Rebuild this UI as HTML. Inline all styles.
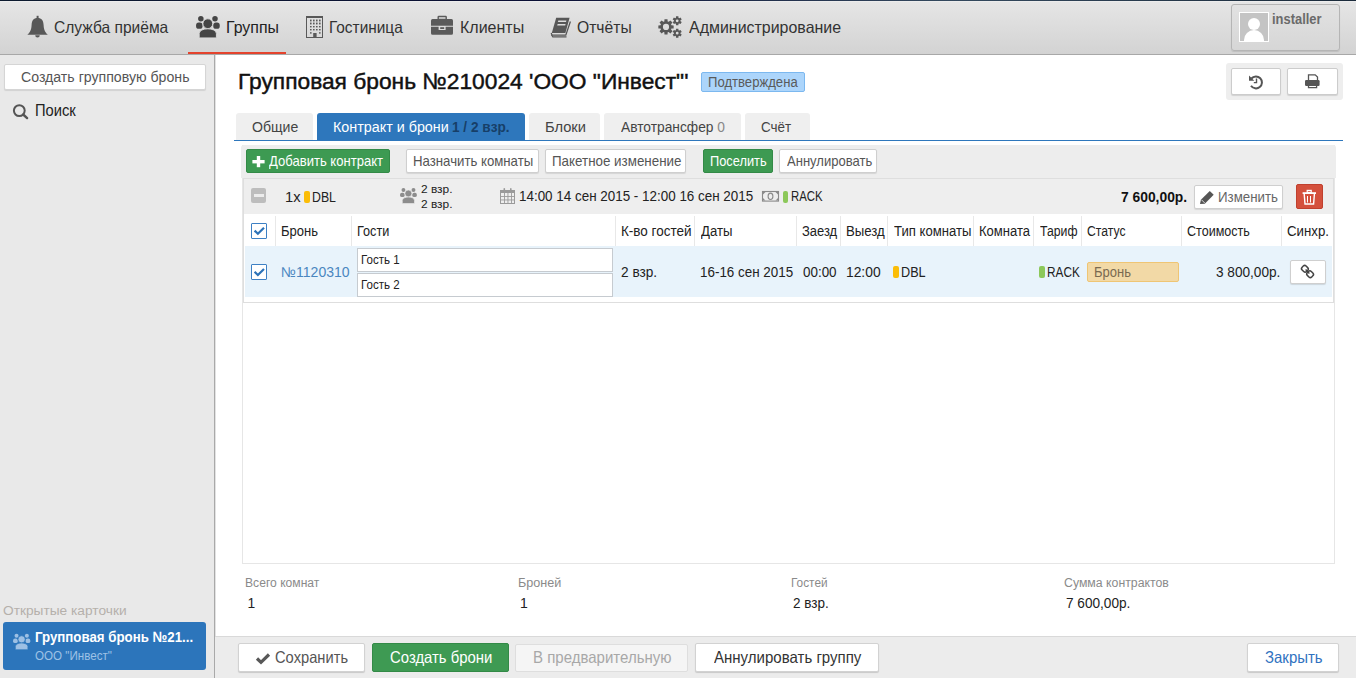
<!DOCTYPE html>
<html><head><meta charset="utf-8">
<style>
*{box-sizing:border-box;margin:0;padding:0}
html,body{width:1356px;height:678px;overflow:hidden;background:#fff;font-family:"Liberation Sans",sans-serif;color:#222}
.t{position:absolute;white-space:nowrap;line-height:30px;transform-origin:0 0}
#h1{-webkit-text-stroke:0.45px currentColor}
.b{position:absolute}
svg{position:absolute;overflow:visible}
</style></head><body>
<!-- top nav -->
<div class="b" style="left:0;top:0;width:1356px;height:55px;background:linear-gradient(#e6e6e6,#d3d3d3);border-bottom:1px solid #a8a8a8"></div>
<div class="b" style="left:0;top:0;width:1356px;height:1px;background:linear-gradient(90deg,#0c1a2e,#0a0f35 40%,#34495e 70%,#1a2a3a)"></div><div class="b" style="left:0;top:1px;width:1356px;height:1px;background:#ececec"></div>
<div class="b" style="left:188px;top:52px;width:98px;height:2px;background:#e4432d"></div>
<!-- user box -->
<div class="b" style="left:1231px;top:4px;width:109px;height:47px;background:linear-gradient(#e2e2e2,#d6d6d6);border:1px solid #b5b5b5;border-radius:3px;box-shadow:0 1px 1px rgba(0,0,0,.1)"></div>
<div class="b" style="left:1239px;top:12px;width:30px;height:30px;background:#c4c4c4;border:1px solid #fff;overflow:hidden">
  <div class="b" style="left:7.8px;top:5px;width:12.4px;height:12.4px;border-radius:50%;background:#fff"></div>
  <div class="b" style="left:3.7px;top:16.7px;width:20.7px;height:14px;border-radius:10.3px 10.3px 0 0;background:#fff"></div>
</div>
<!-- sidebar -->
<div class="b" style="left:0;top:55px;width:215px;height:623px;background:#e9e9e9;border-right:1px solid #a9a9a9"></div><div class="b" style="left:215px;top:55px;width:1px;height:623px;background:#e2e2e2"></div>
<div class="b" style="left:4px;top:64px;width:202px;height:26px;background:#fff;border:1px solid #d5d5d5;border-radius:2px;box-shadow:0 1px 1px rgba(0,0,0,.1)"></div>
<div class="b" style="left:3px;top:622px;width:203px;height:48px;background:#2c75bb;border-radius:3px"></div>
<!-- history/print -->
<div class="b" style="left:1226px;top:63px;width:117px;height:37px;background:#eeeeee;border-radius:3px"></div>
<div class="b" style="left:1231px;top:68px;width:50px;height:27px;background:#fff;border:1px solid #ccc;border-radius:2px;box-shadow:0 1px 1px rgba(0,0,0,.12)"></div>
<div class="b" style="left:1287px;top:68px;width:51px;height:27px;background:#fff;border:1px solid #ccc;border-radius:2px;box-shadow:0 1px 1px rgba(0,0,0,.12)"></div>
<!-- badge -->
<div class="b" style="left:701px;top:72px;width:104px;height:20px;background:#acd5fb;border:1px solid #7cb8ef;border-radius:2px"></div>
<!-- tabs -->
<div class="b" style="left:236px;top:113px;width:77px;height:27px;background:#efefef;border-radius:3px 3px 0 0"></div>
<div class="b" style="left:317px;top:113px;width:208px;height:28px;background:#2e77bc;border-radius:3px 3px 0 0"></div>
<div class="b" style="left:529px;top:113px;width:71px;height:27px;background:#efefef;border-radius:3px 3px 0 0"></div>
<div class="b" style="left:604px;top:113px;width:137px;height:27px;background:#efefef;border-radius:3px 3px 0 0"></div>
<div class="b" style="left:745px;top:113px;width:65px;height:27px;background:#efefef;border-radius:3px 3px 0 0"></div>
<div class="b" style="left:234px;top:140px;width:1109px;height:1px;background:#2e77bc"></div>
<!-- outer container -->
<div class="b" style="left:242px;top:145px;width:1093px;height:419px;border:1px solid #e6e6e6"></div>
<!-- toolbar -->
<div class="b" style="left:241px;top:145px;width:1095px;height:33px;background:#ededed;border-radius:3px 3px 0 0"></div>
<div class="b" style="left:246px;top:149px;width:144px;height:24px;background:#3d9a52;border:1px solid #338a47;border-radius:2px"></div>
<div class="b" style="left:406px;top:149px;width:133px;height:24px;background:#fff;border:1px solid #cfcfcf;border-radius:2px;box-shadow:0 1px 1px rgba(0,0,0,.1)"></div>
<div class="b" style="left:545px;top:149px;width:141px;height:24px;background:#fff;border:1px solid #cfcfcf;border-radius:2px;box-shadow:0 1px 1px rgba(0,0,0,.1)"></div>
<div class="b" style="left:703px;top:149px;width:70px;height:24px;background:#3d9a52;border:1px solid #338a47;border-radius:2px"></div>
<div class="b" style="left:779px;top:149px;width:98px;height:24px;background:#fff;border:1px solid #cfcfcf;border-radius:2px;box-shadow:0 1px 1px rgba(0,0,0,.1)"></div>
<!-- contract block -->
<div class="b" style="left:243px;top:178px;width:1091px;height:125px;border:1px solid #dedede;background:#fff"></div>
<div class="b" style="left:244px;top:179px;width:1089px;height:35px;background:#eeeeee"></div>
<div class="b" style="left:251px;top:188px;width:15px;height:15px;background:#bdbdbd;border-radius:2px"><div class="b" style="left:2.5px;top:6px;width:10px;height:3px;background:#ececec"></div></div>
<div class="b" style="left:304px;top:191px;width:6px;height:12px;background:#fbbd08;border-radius:2px"></div>
<div class="b" style="left:783px;top:191px;width:5px;height:12px;background:#8cc85a;border-radius:2px"></div>
<div class="b" style="left:1194px;top:185px;width:89px;height:24px;background:#fff;border:1px solid #cfcfcf;border-radius:2px;box-shadow:0 1px 1px rgba(0,0,0,.1)"></div>
<div class="b" style="left:1296px;top:184px;width:27px;height:25px;background:#d4503c;border:1px solid #c0402e;border-radius:2px"></div>
<!-- header separators -->
<div class="b" style="left:275px;top:216px;width:1px;height:30px;background:#e8e8e8"></div>
<div class="b" style="left:351px;top:216px;width:1px;height:30px;background:#e8e8e8"></div>
<div class="b" style="left:615px;top:216px;width:1px;height:30px;background:#e8e8e8"></div>
<div class="b" style="left:694px;top:216px;width:1px;height:30px;background:#e8e8e8"></div>
<div class="b" style="left:796px;top:216px;width:1px;height:30px;background:#e8e8e8"></div>
<div class="b" style="left:840px;top:216px;width:1px;height:30px;background:#e8e8e8"></div>
<div class="b" style="left:887px;top:216px;width:1px;height:30px;background:#e8e8e8"></div>
<div class="b" style="left:973px;top:216px;width:1px;height:30px;background:#e8e8e8"></div>
<div class="b" style="left:1033px;top:216px;width:1px;height:30px;background:#e8e8e8"></div>
<div class="b" style="left:1081px;top:216px;width:1px;height:30px;background:#e8e8e8"></div>
<div class="b" style="left:1181px;top:216px;width:1px;height:30px;background:#e8e8e8"></div>
<div class="b" style="left:1281px;top:216px;width:1px;height:30px;background:#e8e8e8"></div>
<!-- row -->
<div class="b" style="left:245px;top:246px;width:1087px;height:51px;background:#e8f3fb"></div>
<div class="b" style="left:357px;top:248px;width:256px;height:24px;background:#fff;border:1px solid #c6cbd0"></div>
<div class="b" style="left:357px;top:273px;width:256px;height:24px;background:#fff;border:1px solid #c6cbd0"></div>
<div class="b" style="left:893px;top:266px;width:6px;height:12px;background:#fbbd08;border-radius:2px"></div>
<div class="b" style="left:1039px;top:266px;width:6px;height:12px;background:#8cc85a;border-radius:2px"></div>
<div class="b" style="left:1087px;top:262px;width:92px;height:20px;background:#f2d9a6;border:1px solid #efc574;border-radius:2px"></div>
<div class="b" style="left:1290px;top:260px;width:36px;height:24px;background:#fff;border:1px solid #cfcfcf;border-radius:2px;box-shadow:0 1px 1px rgba(0,0,0,.12)"></div>
<!-- checkboxes -->
<div class="b" style="left:251px;top:223px;width:16px;height:16px;background:#fff;border:1px solid #3d80c4;border-radius:1px"></div>
<div class="b" style="left:251px;top:264px;width:16px;height:16px;background:#fff;border:1px solid #3d80c4;border-radius:1px"></div>
<!-- footer -->
<div class="b" style="left:215px;top:636px;width:1141px;height:42px;background:#ececec;border-top:1px solid #d9d9d9"></div>
<div class="b" style="left:238px;top:643px;width:127px;height:29px;background:#fff;border:1px solid #d2d2d2;border-radius:2px;box-shadow:0 1px 1px rgba(0,0,0,.15)"></div>
<div class="b" style="left:372px;top:643px;width:137px;height:29px;background:#3e9a53;border:1px solid #338a47;border-radius:2px"></div>
<div class="b" style="left:515px;top:644px;width:173px;height:28px;background:#f5f5f5;border:1px solid #dedede;border-radius:2px"></div>
<div class="b" style="left:695px;top:643px;width:184px;height:29px;background:#fff;border:1px solid #d2d2d2;border-radius:2px;box-shadow:0 1px 1px rgba(0,0,0,.15)"></div>
<div class="b" style="left:1247px;top:643px;width:92px;height:29px;background:#fff;border:1px solid #d2d2d2;border-radius:2px;box-shadow:0 1px 1px rgba(0,0,0,.15)"></div>

<svg width="1356" height="678" style="left:0;top:0" viewBox="0 0 1356 678"><rect x="36.6" y="15.8" width="2" height="3" fill="#585858"/><path d="M37.6,18 C33.6,18 31.8,20.5 31.6,25 C31.3,30.5 30,32.3 27.3,34.8 L47.9,34.8 C45.2,32.3 43.9,30.5 43.6,25 C43.4,20.5 41.6,18 37.6,18 Z" fill="#585858"/><path d="M35.2,35.2 h4.6 a2.3,2.3 0 0 1 -4.6,0 Z" fill="#585858"/><circle cx="200.85" cy="18.85" r="2.75" fill="#454545"/><circle cx="215.00" cy="18.85" r="2.75" fill="#454545"/><rect x="196.10" y="22.60" width="6.40" height="6.20" rx="2.60" fill="#454545"/><rect x="213.30" y="22.60" width="6.40" height="6.20" rx="2.60" fill="#454545"/><circle cx="207.80" cy="23.70" r="4.90" fill="#454545" stroke="#dbdbdb" stroke-width="0.90"/><path d="M199.20,37.90 L199.20,33.60 C199.20,27.20 216.40,27.20 216.40,33.60 L216.40,37.90 Z" fill="#454545" stroke="#dbdbdb" stroke-width="0.90"/><rect x="306" y="16" width="17" height="2" fill="#595959"/><rect x="306.5" y="17" width="16" height="20.5" fill="none" stroke="#595959" stroke-width="1"/><rect x="310" y="19.6" width="1.6" height="1.8" fill="#595959"/><rect x="310" y="22.6" width="1.6" height="1.8" fill="#595959"/><rect x="310" y="26" width="1.6" height="1.4" fill="#595959"/><rect x="310" y="29" width="1.6" height="1.4" fill="#595959"/><rect x="313" y="19.6" width="1.6" height="1.8" fill="#595959"/><rect x="313" y="22.6" width="1.6" height="1.8" fill="#595959"/><rect x="313" y="26" width="1.6" height="1.4" fill="#595959"/><rect x="313" y="29" width="1.6" height="1.4" fill="#595959"/><rect x="316" y="19.6" width="1.6" height="1.8" fill="#595959"/><rect x="316" y="22.6" width="1.6" height="1.8" fill="#595959"/><rect x="316" y="26" width="1.6" height="1.4" fill="#595959"/><rect x="316" y="29" width="1.6" height="1.4" fill="#595959"/><rect x="319" y="19.6" width="1.6" height="1.8" fill="#595959"/><rect x="319" y="22.6" width="1.6" height="1.8" fill="#595959"/><rect x="319" y="26" width="1.6" height="1.4" fill="#595959"/><rect x="319" y="29" width="1.6" height="1.4" fill="#595959"/><rect x="310" y="32.2" width="1.6" height="1.4" fill="#595959"/><rect x="319" y="32.2" width="1.6" height="1.4" fill="#595959"/><rect x="313.2" y="33" width="3.4" height="4.8" fill="#595959"/><rect x="438.2" y="16.5" width="8" height="3" fill="none" stroke="#5a5a5a" stroke-width="1.4" rx="0.6"/><path d="M432.5,19 h19 a1.5,1.5 0 0 1 1.5,1.5 v5.3 h-22 v-5.3 a1.5,1.5 0 0 1 1.5,-1.5 Z" fill="#5a5a5a"/><path d="M431,26.8 h7.6 v3.2 h7 v-3.2 h7.4 v6.5 a1.5,1.5 0 0 1 -1.5,1.5 h-19 a1.5,1.5 0 0 1 -1.5,-1.5 Z" fill="#5a5a5a"/><rect x="440.2" y="27.2" width="4" height="1.8" fill="#5a5a5a"/><path d="M556.2,17.8 L569.6,17.8 L565.4,33 L551.8,33 Z" fill="#575757"/><path d="M558.3,20.6 L566.4,20.6 L566,22 L557.9,22 Z" fill="#dcdcdc"/><path d="M557.6,24 L565.6,24 L565.2,25.4 L557.2,25.4 Z" fill="#dcdcdc"/><path d="M551.2,33 L552,35.2 L565.8,35.2 L570.4,21.5" fill="none" stroke="#575757" stroke-width="1.3"/><path d="M551.6,35 L552.8,36.9 L566.5,36.9" fill="none" stroke="#575757" stroke-width="1.2"/><path d="M673.65,25.38 L673.65,28.42 L671.45,28.55 L671.03,29.59 L672.49,31.23 L670.33,33.39 L668.69,31.93 L667.65,32.35 L667.52,34.55 L664.48,34.55 L664.35,32.35 L663.31,31.93 L661.67,33.39 L659.51,31.23 L660.97,29.59 L660.55,28.55 L658.35,28.42 L658.35,25.38 L660.55,25.25 L660.97,24.21 L659.51,22.57 L661.67,20.41 L663.31,21.87 L664.35,21.45 L664.48,19.25 L667.52,19.25 L667.65,21.45 L668.69,21.87 L670.33,20.41 L672.49,22.57 L671.03,24.21 L671.45,25.25 Z M669.10,26.90 A3.1,3.1 0 1 0 662.90,26.90 A3.1,3.1 0 1 0 669.10,26.90 Z" fill="#575757" fill-rule="evenodd"/><path d="M681.74,22.02 L680.52,24.12 L679.21,23.42 L678.46,23.85 L678.42,25.34 L675.98,25.34 L675.94,23.85 L675.19,23.42 L673.88,24.12 L672.66,22.02 L673.93,21.23 L673.93,20.37 L672.66,19.58 L673.88,17.48 L675.19,18.18 L675.94,17.75 L675.98,16.26 L678.42,16.26 L678.46,17.75 L679.21,18.18 L680.52,17.48 L681.74,19.58 L680.47,20.37 L680.47,21.23 Z M678.60,20.80 A1.4,1.4 0 1 0 675.80,20.80 A1.4,1.4 0 1 0 678.60,20.80 Z" fill="#575757" fill-rule="evenodd"/><path d="M681.74,34.42 L680.52,36.52 L679.21,35.82 L678.46,36.25 L678.42,37.74 L675.98,37.74 L675.94,36.25 L675.19,35.82 L673.88,36.52 L672.66,34.42 L673.93,33.63 L673.93,32.77 L672.66,31.98 L673.88,29.88 L675.19,30.58 L675.94,30.15 L675.98,28.66 L678.42,28.66 L678.46,30.15 L679.21,30.58 L680.52,29.88 L681.74,31.98 L680.47,32.77 L680.47,33.63 Z M678.60,33.20 A1.4,1.4 0 1 0 675.80,33.20 A1.4,1.4 0 1 0 678.60,33.20 Z" fill="#575757" fill-rule="evenodd"/><circle cx="19.3" cy="110.6" r="5.4" fill="none" stroke="#555" stroke-width="2"/><path d="M23.2,114.5 L27.1,118.1" stroke="#555" stroke-width="2.4" stroke-linecap="round"/><path d="M1251.4,78.5 A6,6 0 1 1 1251,85.8" fill="none" stroke="#555" stroke-width="2"/><path d="M1249,75.5 L1249,80.8 L1254.3,80.8 Z" fill="#555"/><path d="M1256.5,78.5 V82.6 H1253.8" fill="none" stroke="#555" stroke-width="1.4"/><path d="M1308.5,80 V74.8 H1315.2 L1317.5,77 V80" fill="none" stroke="#555" stroke-width="1.3"/><rect x="1305" y="80" width="14.6" height="6" rx="1.2" fill="#555"/><path d="M1308.5,85 V87.6 H1316.6 V85" fill="none" stroke="#555" stroke-width="1.3"/><rect x="252.4" y="160" width="12.2" height="3.4" fill="#fff"/><rect x="256.8" y="156" width="3.4" height="11.2" fill="#fff"/><circle cx="403.44" cy="190.03" r="1.95" fill="#8c8c8c"/><circle cx="413.49" cy="190.03" r="1.95" fill="#8c8c8c"/><rect x="400.07" y="192.70" width="4.54" height="4.40" rx="1.85" fill="#8c8c8c"/><rect x="412.28" y="192.70" width="4.54" height="4.40" rx="1.85" fill="#8c8c8c"/><circle cx="408.38" cy="193.48" r="3.48" fill="#8c8c8c" stroke="#eeeeee" stroke-width="0.64"/><path d="M402.27,203.56 L402.27,200.51 C402.27,195.96 414.48,195.96 414.48,200.51 L414.48,203.56 Z" fill="#8c8c8c" stroke="#eeeeee" stroke-width="0.64"/><rect x="500.5" y="190.5" width="14" height="13" fill="none" stroke="#9a9a9a" stroke-width="1"/><rect x="500" y="190" width="15" height="3" fill="#9a9a9a"/><rect x="504" y="193" width="0.9" height="10.5" fill="#9a9a9a"/><rect x="507.5" y="193" width="0.9" height="10.5" fill="#9a9a9a"/><rect x="511" y="193" width="0.9" height="10.5" fill="#9a9a9a"/><rect x="500.5" y="196" width="14" height="0.9" fill="#9a9a9a"/><rect x="500.5" y="199.5" width="14" height="0.9" fill="#9a9a9a"/><rect x="503.5" y="188" width="1.6" height="3.5" rx="0.8" fill="#9a9a9a"/><rect x="510" y="188" width="1.6" height="3.5" rx="0.8" fill="#9a9a9a"/><rect x="762.5" y="191.5" width="16" height="9.6" fill="none" stroke="#8a8a8a" stroke-width="1.1"/><path d="M763,192 L765.5,192 L763,194.5 Z M778,192 L775.5,192 L778,194.5 Z M763,200.6 L765.5,200.6 L763,198.1 Z M778,200.6 L775.5,200.6 L778,198.1 Z" fill="#8a8a8a"/><ellipse cx="770.5" cy="196.3" rx="2.4" ry="3.2" fill="none" stroke="#8a8a8a" stroke-width="1.1"/><path d="M1200,204 L1200.9,199.8 L1209.8,190.9 L1213.7,194.8 L1204.8,203.7 Z" fill="#555"/><path d="M1201.5,199.8 L1204.8,203.1" stroke="#fff" stroke-width="0.8"/><rect x="1307.2" y="190.4" width="4" height="2" fill="none" stroke="#fff" stroke-width="1.2"/><rect x="1302.6" y="192.2" width="13.4" height="1.8" fill="#fff"/><path d="M1304.2,194 L1305,204 H1313.6 L1314.4,194" fill="none" stroke="#fff" stroke-width="1.4"/><rect x="1307" y="196" width="1" height="6.5" fill="#fff"/><rect x="1310" y="196" width="1" height="6.5" fill="#fff"/><path d="M254.6,230.6 L257.9,233.8 L264,227.8" fill="none" stroke="#2b72b8" stroke-width="2.2"/><path d="M254.6,271.8 L257.9,275.0 L264,269.0" fill="none" stroke="#2b72b8" stroke-width="2.2"/><rect x="1301.8" y="266" width="6.2" height="5.6" rx="2" transform="rotate(45 1304.9 268.8)" fill="none" stroke="#444" stroke-width="1.5"/><rect x="1307" y="271.4" width="6.2" height="5.6" rx="2" transform="rotate(45 1310.1 274.2)" fill="none" stroke="#444" stroke-width="1.5"/><path d="M1305.6,269.6 L1309.4,273.4" stroke="#444" stroke-width="1.4"/><path d="M257,658.5 L261,662.3 L269,654.5" fill="none" stroke="#585858" stroke-width="3.2"/><circle cx="16.54" cy="635.81" r="2.01" fill="#9dc0e4"/><circle cx="26.87" cy="635.81" r="2.01" fill="#9dc0e4"/><rect x="13.07" y="638.55" width="4.67" height="4.53" rx="1.90" fill="#9dc0e4"/><rect x="25.63" y="638.55" width="4.67" height="4.53" rx="1.90" fill="#9dc0e4"/><circle cx="21.61" cy="639.35" r="3.58" fill="#9dc0e4" stroke="#2c75bb" stroke-width="0.66"/><path d="M15.34,649.72 L15.34,646.58 C15.34,641.91 27.89,641.91 27.89,646.58 L27.89,649.72 Z" fill="#9dc0e4" stroke="#2c75bb" stroke-width="0.66"/></svg>
<div class="t" id="n1" style="left:53.64px;top:12.00px;font-size:16.28px;font-weight:400;color:#333;transform:scaleX(0.9576)">Служба приёма</div>
<div class="t" id="n2" style="left:226.22px;top:12.00px;font-size:16.28px;font-weight:400;color:#222;transform:scaleX(0.9769)">Группы</div>
<div class="t" id="n3" style="left:329.15px;top:12.00px;font-size:16.28px;font-weight:400;color:#333;transform:scaleX(0.9468)">Гостиница</div>
<div class="t" id="n4" style="left:459.62px;top:12.00px;font-size:16.28px;font-weight:400;color:#333;transform:scaleX(0.9841)">Клиенты</div>
<div class="t" id="n5" style="left:576.64px;top:12.00px;font-size:16.28px;font-weight:400;color:#333;transform:scaleX(0.9636)">Отчёты</div>
<div class="t" id="n6" style="left:688.60px;top:12.00px;font-size:16.28px;font-weight:400;color:#333;transform:scaleX(0.9806)">Администрирование</div>
<div class="t" id="usr" style="left:1272.21px;top:4.40px;font-size:14.53px;font-weight:700;color:#6a6a6a;transform:scaleX(0.8909)">installer</div>
<div class="t" id="s1" style="left:21.37px;top:62.00px;font-size:15.26px;font-weight:400;color:#555;transform:scaleX(0.9267)">Создать групповую бронь</div>
<div class="t" id="s2" style="left:34.68px;top:96.00px;font-size:15.99px;font-weight:400;color:#222;transform:scaleX(0.9209)">Поиск</div>
<div class="t" id="s3" style="left:3.00px;top:596.00px;font-size:12.50px;font-weight:400;color:#b5b0ab;transform:scaleX(1.0973)">Открытые карточки</div>
<div class="t" id="s4" style="left:35.41px;top:621.60px;font-size:14.97px;font-weight:700;color:#fff;transform:scaleX(0.8864)">Групповая бронь №21...</div>
<div class="t" id="s5" style="left:35.37px;top:640.70px;font-size:12.50px;font-weight:400;color:#9ec2e6;transform:scaleX(0.9280)">ООО "Инвест"</div>
<div class="t" id="h1" style="left:238.29px;top:66.00px;font-size:22.67px;font-weight:400;color:#111;transform:scaleX(1.0045)">Групповая бронь №210024 'ООО "Инвест"'</div>
<div class="t" id="bdg" style="left:708.06px;top:66.80px;font-size:13.95px;font-weight:400;color:#5a5a5a;transform:scaleX(0.9400)">Подтверждена</div>
<div class="t" id="tb1" style="left:252.05px;top:112.00px;font-size:14.83px;font-weight:400;color:#444;transform:scaleX(0.9489)">Общие</div>
<div class="t" id="tb2" style="left:332.63px;top:112.00px;font-size:14.83px;font-weight:400;color:#fff;transform:scaleX(0.9661)">Контракт и брони</div>
<div class="t" id="tb2b" style="left:452.18px;top:112.00px;font-size:14.83px;font-weight:700;color:#173f68;transform:scaleX(0.9180)">1 / 2 взр.</div>
<div class="t" id="tb3" style="left:544.61px;top:112.00px;font-size:14.83px;font-weight:400;color:#444;transform:scaleX(0.9897)">Блоки</div>
<div class="t" id="tb4" style="left:620.60px;top:112.00px;font-size:14.83px;font-weight:400;color:#444;transform:scaleX(0.9286)">Автотрансфер <span style="color:#888">0</span></div>
<div class="t" id="tb5" style="left:760.69px;top:112.00px;font-size:14.83px;font-weight:400;color:#444;transform:scaleX(0.9062)">Счёт</div>
<div class="t" id="b1" style="left:268.80px;top:145.70px;font-size:14.97px;font-weight:400;color:#fff;transform:scaleX(0.8725)">Добавить контракт</div>
<div class="t" id="b2" style="left:413.02px;top:145.70px;font-size:14.97px;font-weight:400;color:#555;transform:scaleX(0.8821)">Назначить комнаты</div>
<div class="t" id="b3" style="left:551.71px;top:145.70px;font-size:14.97px;font-weight:400;color:#555;transform:scaleX(0.8930)">Пакетное изменение</div>
<div class="t" id="b4" style="left:710.24px;top:145.70px;font-size:14.97px;font-weight:400;color:#fff;transform:scaleX(0.8569)">Поселить</div>
<div class="t" id="b5" style="left:787.10px;top:145.70px;font-size:14.97px;font-weight:400;color:#555;transform:scaleX(0.8711)">Аннулировать</div>
<div class="t" id="c1" style="left:284.89px;top:182.00px;font-size:14.53px;font-weight:400;color:#222;transform:scaleX(1.0143)">1x</div>
<div class="t" id="c2" style="left:312.45px;top:182.00px;font-size:14.53px;font-weight:400;color:#222;transform:scaleX(0.8481)">DBL</div>
<div class="t" id="c3" style="left:420.88px;top:174.00px;font-size:11.63px;font-weight:400;color:#222;transform:scaleX(1.0241)">2 взр.</div>
<div class="t" id="c4" style="left:420.88px;top:188.70px;font-size:11.63px;font-weight:400;color:#222;transform:scaleX(1.0241)">2 взр.</div>
<div class="t" id="c5" style="left:519.28px;top:181.40px;font-size:14.53px;font-weight:400;color:#222;transform:scaleX(0.9246)">14:00 14 сен 2015 - 12:00 16 сен 2015</div>
<div class="t" id="c6" style="left:791.32px;top:181.40px;font-size:14.53px;font-weight:400;color:#222;transform:scaleX(0.7821)">RACK</div>
<div class="t" id="c7" style="left:1121.35px;top:182.00px;font-size:14.53px;font-weight:700;color:#111;transform:scaleX(0.9529)">7 600,00р.</div>
<div class="t" id="c8" style="left:1218.11px;top:182.00px;font-size:14.97px;font-weight:400;color:#666;transform:scaleX(0.8879)">Изменить</div>
<div class="t" id="th1" style="left:281.18px;top:216.00px;font-size:14.24px;font-weight:400;color:#222;transform:scaleX(0.9154)">Бронь</div>
<div class="t" id="th2" style="left:357.11px;top:216.00px;font-size:14.24px;font-weight:400;color:#222;transform:scaleX(0.8912)">Гости</div>
<div class="t" id="th3" style="left:621.15px;top:216.00px;font-size:14.24px;font-weight:400;color:#222;transform:scaleX(0.9479)">К-во гостей</div>
<div class="t" id="th4" style="left:700.60px;top:216.00px;font-size:14.24px;font-weight:400;color:#222;transform:scaleX(0.9242)">Даты</div>
<div class="t" id="th5" style="left:802.09px;top:216.00px;font-size:14.24px;font-weight:400;color:#222;transform:scaleX(0.9105)">Заезд</div>
<div class="t" id="th6" style="left:845.67px;top:216.00px;font-size:14.24px;font-weight:400;color:#222;transform:scaleX(0.9268)">Выезд</div>
<div class="t" id="th7" style="left:894.10px;top:216.00px;font-size:14.24px;font-weight:400;color:#222;transform:scaleX(0.9217)">Тип комнаты</div>
<div class="t" id="th8" style="left:978.68px;top:216.00px;font-size:14.24px;font-weight:400;color:#222;transform:scaleX(0.9164)">Комната</div>
<div class="t" id="th9" style="left:1039.90px;top:216.00px;font-size:14.24px;font-weight:400;color:#222;transform:scaleX(0.8605)">Тариф</div>
<div class="t" id="th10" style="left:1086.74px;top:216.00px;font-size:14.24px;font-weight:400;color:#222;transform:scaleX(0.8568)">Статус</div>
<div class="t" id="th11" style="left:1186.92px;top:216.00px;font-size:14.24px;font-weight:400;color:#222;transform:scaleX(0.8829)">Стоимость</div>
<div class="t" id="th12" style="left:1287.17px;top:216.00px;font-size:14.24px;font-weight:400;color:#222;transform:scaleX(0.9302)">Синхр.</div>
<div class="t" id="r1" style="left:281.11px;top:256.90px;font-size:14.24px;font-weight:400;color:#4a86c0;transform:scaleX(0.9853)">№1120310</div>
<div class="t" id="r2" style="left:361.02px;top:245.00px;font-size:13.08px;font-weight:400;color:#222;transform:scaleX(0.8833)">Гость 1</div>
<div class="t" id="r3" style="left:361.02px;top:270.00px;font-size:13.08px;font-weight:400;color:#222;transform:scaleX(0.8833)">Гость 2</div>
<div class="t" id="r4" style="left:621.14px;top:256.50px;font-size:14.24px;font-weight:400;color:#222;transform:scaleX(0.9583)">2 взр.</div>
<div class="t" id="r5" style="left:700.36px;top:256.50px;font-size:14.24px;font-weight:400;color:#222;transform:scaleX(0.9418)">16-16 сен 2015</div>
<div class="t" id="r6" style="left:802.60px;top:256.50px;font-size:14.24px;font-weight:400;color:#222;transform:scaleX(0.9429)">00:00</div>
<div class="t" id="r7" style="left:845.63px;top:256.50px;font-size:14.24px;font-weight:400;color:#222;transform:scaleX(0.9706)">12:00</div>
<div class="t" id="r8" style="left:901.41px;top:256.50px;font-size:14.24px;font-weight:400;color:#222;transform:scaleX(0.8885)">DBL</div>
<div class="t" id="r9" style="left:1047.27px;top:256.50px;font-size:14.24px;font-weight:400;color:#222;transform:scaleX(0.8289)">RACK</div>
<div class="t" id="r10" style="left:1093.98px;top:257.00px;font-size:14.24px;font-weight:400;color:#7a6a50;transform:scaleX(0.9154)">Бронь</div>
<div class="t" id="r11" style="left:1216.24px;top:256.50px;font-size:14.24px;font-weight:400;color:#222;transform:scaleX(0.9569)">3 800,00р.</div>
<div class="t" id="sm1" style="left:245.33px;top:568.00px;font-size:12.50px;font-weight:400;color:#8a8a8a;transform:scaleX(0.9697)">Всего комнат</div>
<div class="t" id="sm2" style="left:247.60px;top:588.00px;font-size:13.81px;font-weight:400;color:#222;transform:scaleX(1.0000)">1</div>
<div class="t" id="sm3" style="left:517.59px;top:568.00px;font-size:12.50px;font-weight:400;color:#8a8a8a;transform:scaleX(1.0098)">Броней</div>
<div class="t" id="sm4" style="left:520.28px;top:588.00px;font-size:13.81px;font-weight:400;color:#222;transform:scaleX(1.0167)">1</div>
<div class="t" id="sm5" style="left:790.65px;top:568.00px;font-size:12.50px;font-weight:400;color:#8a8a8a;transform:scaleX(0.9459)">Гостей</div>
<div class="t" id="sm6" style="left:793.12px;top:588.00px;font-size:13.81px;font-weight:400;color:#222;transform:scaleX(0.9771)">2 взр.</div>
<div class="t" id="sm7" style="left:1063.62px;top:568.00px;font-size:12.50px;font-weight:400;color:#8a8a8a;transform:scaleX(0.9838)">Сумма контрактов</div>
<div class="t" id="sm8" style="left:1066.01px;top:588.00px;font-size:13.81px;font-weight:400;color:#222;transform:scaleX(0.9873)">7 600,00р.</div>
<div class="t" id="f1" style="left:275.32px;top:642.90px;font-size:16.72px;font-weight:400;color:#555;transform:scaleX(0.8802)">Сохранить</div>
<div class="t" id="f2" style="left:390.21px;top:642.90px;font-size:16.72px;font-weight:400;color:#fff;transform:scaleX(0.8920)">Создать брони</div>
<div class="t" id="f3" style="left:532.70px;top:642.90px;font-size:16.72px;font-weight:400;color:#a8a8a8;transform:scaleX(0.8987)">В предварительную</div>
<div class="t" id="f4" style="left:713.60px;top:642.90px;font-size:16.72px;font-weight:400;color:#333;transform:scaleX(0.8994)">Аннулировать группу</div>
<div class="t" id="f5" style="left:1265.30px;top:642.60px;font-size:16.72px;font-weight:400;color:#2f72c0;transform:scaleX(0.8952)">Закрыть</div>
</body></html>
